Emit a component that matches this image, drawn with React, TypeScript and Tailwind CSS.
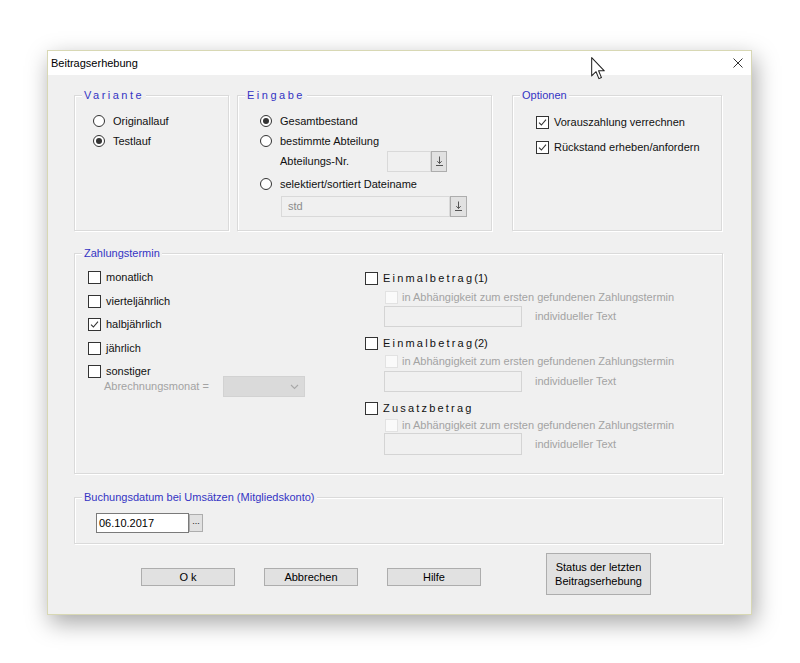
import React from "react";

function Radio({ checked = false }: { checked?: boolean }) {
  return (
    <span className="flex h-[12px] w-[12px] shrink-0 items-center justify-center rounded-full border border-[#333333] bg-white">
      {checked && <span className="h-[6px] w-[6px] rounded-full bg-[#333333]" />}
    </span>
  );
}

function Check({ checked = false, disabled = false }: { checked?: boolean; disabled?: boolean }) {
  if (disabled) {
    return <span className="block h-[13px] w-[13px] shrink-0 border border-[#e2e2e2] bg-[#fafafa]" />;
  }
  return (
    <span className="flex h-[13px] w-[13px] shrink-0 items-center justify-center border border-[#333333] bg-white">
      {checked && (
        <svg width="9" height="9" viewBox="0 0 9 9">
          <path d="M1 4.6 L3.4 7 L8 1.6" fill="none" stroke="#333333" strokeWidth="1.1" />
        </svg>
      )}
    </span>
  );
}

function Group({
  label,
  spaced = false,
  className,
  children,
}: {
  label: string;
  spaced?: boolean;
  className: string;
  children?: React.ReactNode;
}) {
  return (
    <div className={"relative shrink-0 border border-[#dadada] shadow-[inset_1px_1px_0_#ffffff,1px_1px_0_#ffffff] " + className}>
      <span
        className={
          "absolute left-[7px] top-[-7px] whitespace-nowrap bg-[#f0f0f0] px-[2px] leading-[13px] text-[#3434c4] " +
          (spaced ? "tracking-[2.5px]" : "")
        }
      >
        {label}
      </span>
      {children}
    </div>
  );
}

function DownIcon() {
  return (
    <svg width="9" height="11" viewBox="0 0 9 11">
      <path d="M4.5 0.5 V7.5 M2.3 5.2 L4.5 7.5 L6.7 5.2 M1 9.5 H8" fill="none" stroke="#555555" strokeWidth="1" />
    </svg>
  );
}

export default function App() {
  return (
    <div className="relative h-[663px] w-[800px] overflow-hidden bg-white pl-[47px] pt-[50px] font-['Liberation_Sans',Arial,sans-serif] text-[11px] leading-[13px] text-[#111111]">
      <div className="flex h-[565px] w-[705px] flex-col border border-[#d8d8b4] bg-[#f0f0f0] shadow-[3px_8px_22px_rgba(0,0,0,0.35)]">
        {/* title bar */}
        <div className="flex h-[24px] shrink-0 items-center justify-between bg-white pl-[3px] pr-[8px]">
          <span className="text-black">Beitragserhebung</span>
          <svg width="10" height="10" viewBox="0 0 10 10">
            <path d="M0.5 0.5 L9.5 9.5 M9.5 0.5 L0.5 9.5" stroke="#333333" strokeWidth="1" />
          </svg>
        </div>

        <div className="flex flex-1 flex-col pl-[26px] pr-[28px]">
          {/* top row */}
          <div className="mt-[20px] flex h-[136px]">
            <Group label="Variante" spaced className="h-[136px] w-[155px] pl-[18px] pt-[15px]">
              <div className="flex h-[20px] items-center gap-[8px]">
                <Radio />
                <span>Originallauf</span>
              </div>
              <div className="flex h-[20px] items-center gap-[8px]">
                <Radio checked />
                <span>Testlauf</span>
              </div>
            </Group>

            <Group label="Eingabe" spaced className="ml-[8px] h-[136px] w-[255px] pl-[22px] pt-[15px]">
              <div className="flex h-[20px] items-center gap-[8px]">
                <Radio checked />
                <span>Gesamtbestand</span>
              </div>
              <div className="flex h-[20px] items-center gap-[8px]">
                <Radio />
                <span>bestimmte Abteilung</span>
              </div>
              <div className="ml-[20px] flex h-[21px] items-center">
                <span className="w-[107px]">Abteilungs-Nr.</span>
                <span className="h-[21px] w-[44px] border border-[#d9d9d9] bg-[#f0f0f0]" />
                <span className="flex h-[21px] w-[16px] items-center justify-center border border-[#adadad] bg-[#e1e1e1]">
                  <DownIcon />
                </span>
              </div>
              <div className="mt-[2px] flex h-[20px] items-center gap-[8px]">
                <Radio />
                <span>selektiert/sortiert Dateiname</span>
              </div>
              <div className="ml-[21px] mt-[2px] flex h-[21px] items-center">
                <span className="flex h-[21px] w-[169px] items-center border border-[#d9d9d9] bg-[#f0f0f0] pl-[6px] text-[#8c8c8c]">
                  std
                </span>
                <span className="flex h-[21px] w-[17px] items-center justify-center border border-[#adadad] bg-[#e1e1e1]">
                  <DownIcon />
                </span>
              </div>
            </Group>

            <Group label="Optionen" className="ml-[20px] h-[136px] w-[210px] pl-[23px] pt-[16px]">
              <div className="flex h-[20px] items-center gap-[5px]">
                <Check checked />
                <span>Vorauszahlung verrechnen</span>
              </div>
              <div className="mt-[5px] flex h-[20px] items-center gap-[5px]">
                <Check checked />
                <span>Rückstand erheben/anfordern</span>
              </div>
            </Group>
          </div>

          {/* Zahlungstermin */}
          <Group label="Zahlungstermin" className="mt-[22px] flex h-[221px] w-full pl-[13px] pt-[12px]">
            <div className="flex w-[277px] flex-col">
              {["monatlich", "vierteljährlich", "halbjährlich", "jährlich", "sonstiger"].map((t) => (
                <div key={t} className="flex h-[23.5px] items-center gap-[5px]">
                  <Check checked={t === "halbjährlich"} />
                  <span>{t}</span>
                </div>
              ))}
              <div className="mt-[-7.5px] flex h-[21px] items-center pl-[16px]">
                <span className="w-[119px] text-[#a3a3a3]">Abrechnungsmonat =</span>
                <span className="flex h-[21px] w-[82px] items-center justify-end border border-[#d2d2d2] bg-[#dadada] pr-[5px]">
                  <svg width="9" height="6" viewBox="0 0 9 6">
                    <path d="M1 1 L4.5 4.5 L8 1" fill="none" stroke="#a8a8a8" strokeWidth="1.1" />
                  </svg>
                </span>
              </div>
            </div>

            <div className="flex flex-col">
              {[
                { t: "Einmalbetrag", s: "(1)", hm: "", sm: "", im: "mt-[1px] h-[21px]", hh: "h-[24px]", sh: "h-[15px]" },
                { t: "Einmalbetrag", s: "(2)", hm: "mt-[6px]", sm: "mt-[1px]", im: "mt-[2px] h-[21px]", hh: "h-[20px]", sh: "h-[15px]" },
                { t: "Zusatzbetrag", s: "", hm: "mt-[6px]", sm: "", im: "mt-[1px] h-[22px]", hh: "h-[20px]", sh: "h-[14px]" },
              ].map((b, i) => (
                <div key={i} className="flex flex-col">
                  <div className={"flex items-center gap-[5px] " + b.hh + " " + b.hm}>
                    <Check />
                    <span>
                      <span className="tracking-[2.2px]">{b.t}</span>
                      {b.s}
                    </span>
                  </div>
                  <div className={"flex items-center gap-[4px] pl-[20px] " + b.sh + " " + b.sm}>
                    <Check disabled />
                    <span className="text-[#a3a3a3]">in Abhängigkeit zum ersten gefundenen Zahlungstermin</span>
                  </div>
                  <div className={"flex items-center pl-[19px] " + b.im}>
                    <span className="h-full w-[138px] border border-[#d4d4d4] bg-[#f0f0f0]" />
                    <span className="ml-[13px] text-[#a3a3a3]">individueller Text</span>
                  </div>
                </div>
              ))}
            </div>
          </Group>

          {/* Buchungsdatum */}
          <Group label="Buchungsdatum bei Umsätzen (Mitgliedskonto)" className="mt-[23px] flex h-[47px] w-full pl-[21px] pt-[15px]">
            <div className="flex h-[20px] items-start">
              <span className="flex h-[20px] w-[93px] items-center border border-[#7a7a7a] bg-white pl-[2px] text-black">
                06.10.2017
              </span>
              <span className="mt-[1px] flex h-[18px] w-[14px] items-center justify-center border border-[#adadad] bg-[#e1e1e1] pb-[3px] text-[9px] leading-[9px]">
                ...
              </span>
            </div>
          </Group>

          {/* buttons */}
          <div className="mt-[9px] flex items-start">
            <button className="ml-[67px] mt-[15px] flex h-[18px] w-[94px] items-center justify-center border border-[#adadad] bg-[#e1e1e1] text-black">
              O k
            </button>
            <button className="ml-[29px] mt-[15px] flex h-[18px] w-[94px] items-center justify-center border border-[#adadad] bg-[#e1e1e1] text-black">
              Abbrechen
            </button>
            <button className="ml-[29px] mt-[15px] flex h-[18px] w-[94px] items-center justify-center border border-[#adadad] bg-[#e1e1e1] text-black">
              Hilfe
            </button>
            <button className="ml-[65px] flex h-[42px] w-[105px] flex-col items-center justify-center border border-[#adadad] bg-[#e1e1e1] leading-[14px] text-black">
              <span>Status der letzten</span>
              <span>Beitragserhebung</span>
            </button>
          </div>
        </div>
      </div>

      {/* mouse cursor */}
      <svg className="absolute left-[591px] top-[57px]" width="14" height="23" viewBox="0 0 12 20">
        <path
          d="M0.5 0.5 L0.5 16.5 L4.3 12.8 L6.8 18.8 L9 17.9 L6.5 12 L11.5 12 Z"
          fill="#ffffff"
          stroke="#222222"
          strokeWidth="0.9"
          strokeLinejoin="round"
        />
      </svg>
    </div>
  );
}
